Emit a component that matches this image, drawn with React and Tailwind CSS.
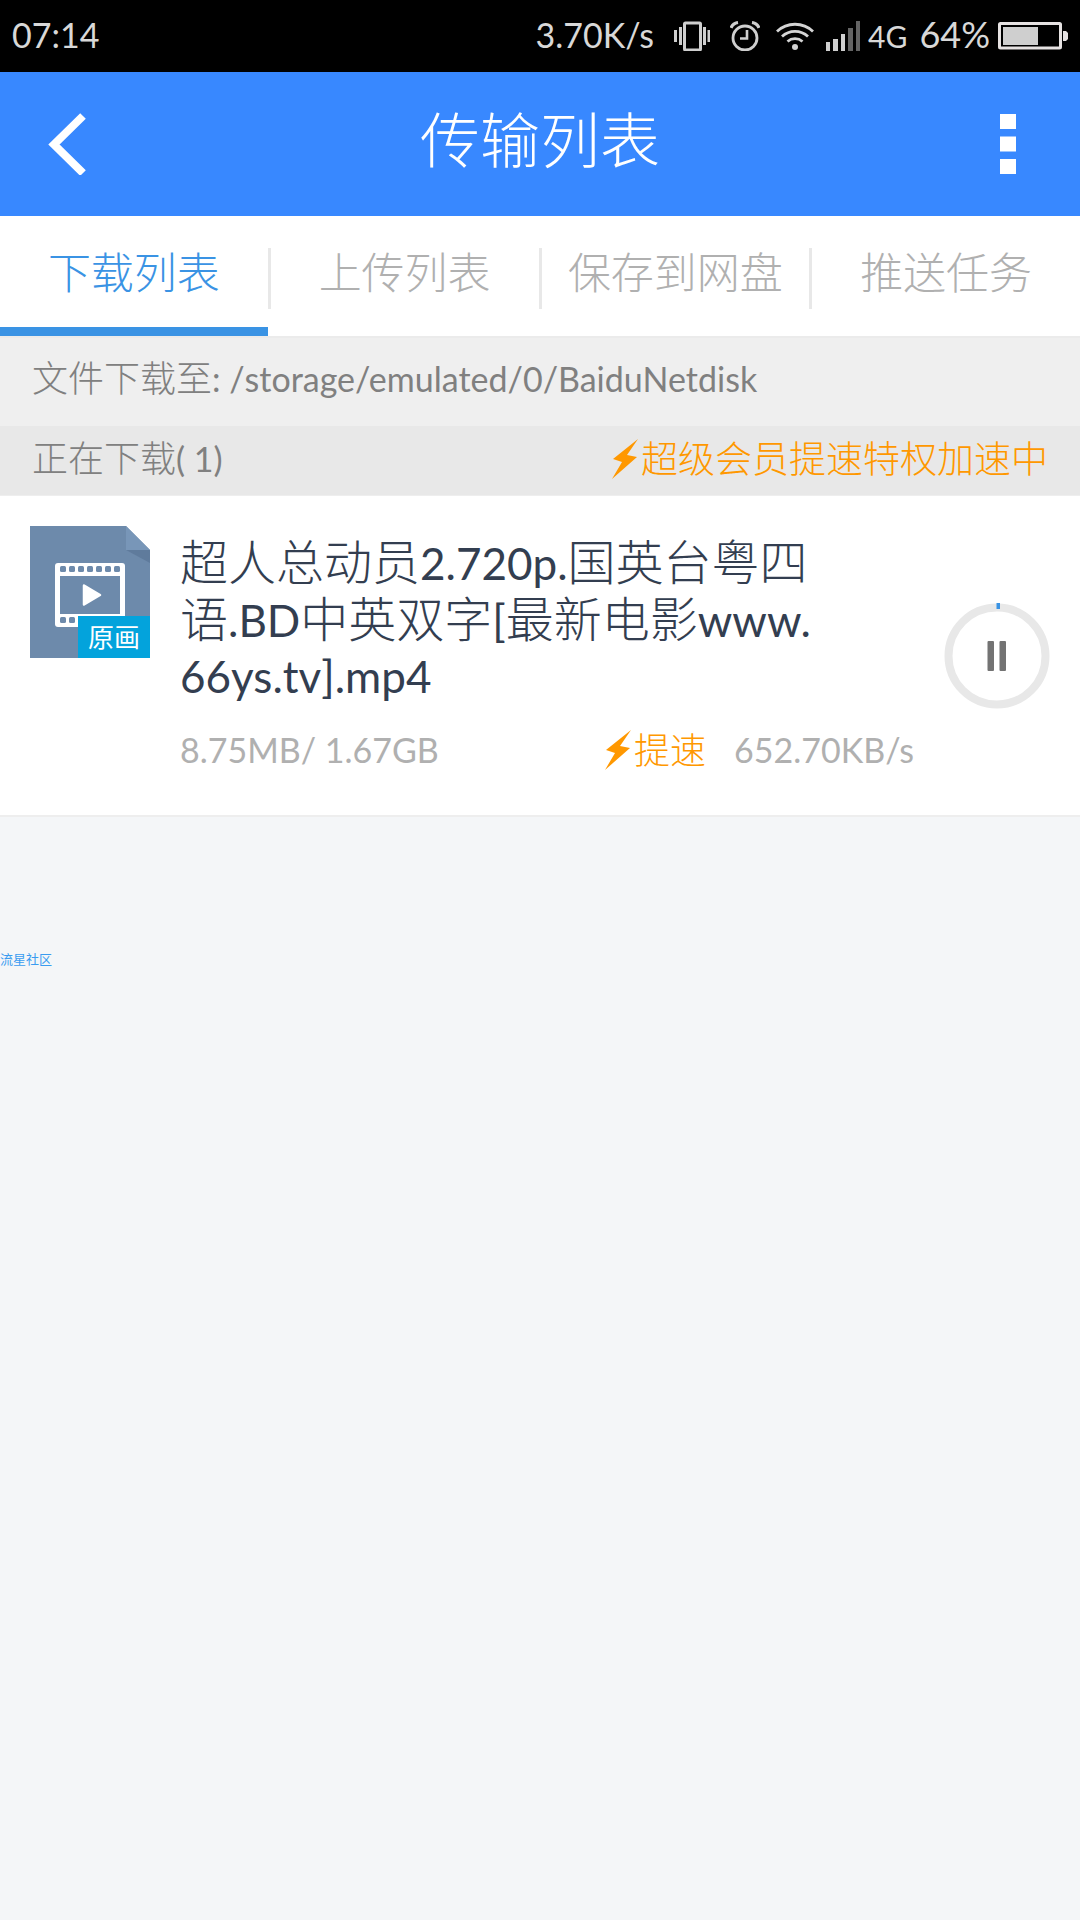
import { Fragment } from "react";

const tabs = [
  { label: "下载列表", active: true },
  { label: "上传列表" },
  { label: "保存到网盘" },
  { label: "推送任务" },
];

function VibrateIcon() {
  return (
    <svg className="h-[30px] w-9" viewBox="0 0 36 30" fill="#cfcfcf" aria-hidden="true">
      <rect x="0" y="9" width="3" height="12" />
      <rect x="5" y="6" width="3" height="18" />
      <rect x="10.500" y="2" width="16" height="27" rx="1" fill="none" stroke="#cfcfcf" strokeWidth="3" />
      <rect x="29" y="6" width="3" height="18" />
      <rect x="33.500" y="9" width="2.500" height="12" />
    </svg>
  );
}

function AlarmIcon() {
  return (
    <svg className="h-[30px] w-[30px]" viewBox="0 0 30 30" fill="none" stroke="#cfcfcf" aria-hidden="true">
      <circle cx="15" cy="17" r="12" strokeWidth="2.800" />
      <path d="M17 9v8.500h-7" strokeWidth="2.600" />
      <path d="M1 7a9 9 0 0 1 7-5.500M29 7a9 9 0 0 0-7-5.500" strokeWidth="3.200" />
    </svg>
  );
}

function WifiIcon() {
  return (
    <svg className="h-[30px] w-[38px]" viewBox="0 0 38 30" fill="none" stroke="#d4d4d4" strokeWidth="2.800" aria-hidden="true">
      <path d="M1 10.500a26 26 0 0 1 36 0" />
      <path d="M6 15.500a19 19 0 0 1 26 0" />
      <path d="M11.500 20.500a11.500 11.500 0 0 1 15 0" />
      <circle cx="19" cy="26" r="3" fill="#d4d4d4" stroke="none" />
    </svg>
  );
}

function SignalIcon() {
  return (
    <svg className="h-[30px] w-[34px]" viewBox="0 0 34 30" fill="#cfcfcf" aria-hidden="true">
      <rect x="0" y="21" width="4" height="9" />
      <rect x="7" y="18" width="5" height="12" />
      <rect x="15" y="13" width="4" height="17" />
      <rect x="22" y="7" width="5" height="23" fill="#646464" />
      <rect x="30" y="0" width="4" height="30" fill="#646464" />
    </svg>
  );
}

function BatteryIcon() {
  return (
    <svg className="h-7 w-[70px]" viewBox="0 0 70 28" aria-hidden="true">
      <rect x="1.500" y="1.500" width="61" height="24.500" rx="1" fill="none" stroke="#e6e2e2" strokeWidth="3" />
      <rect x="5" y="5" width="35" height="18" fill="#cfcfcf" />
      <path d="M65 9h3l2 2v6l-2 2h-3z" fill="#e6e2e2" />
    </svg>
  );
}

function BoltIcon() {
  return (
    <svg className="h-10 w-[30px] shrink-0" viewBox="0 0 30 40" fill="#ff9800" aria-hidden="true">
      <path d="M27 0 2 20l9 3L1 40l25-22-10-2z" />
    </svg>
  );
}

function FileIcon() {
  return (
    <span className="relative block h-[132px] w-[120px] shrink-0">
      <svg className="h-full w-full" viewBox="0 0 120 132" aria-hidden="true">
        <path d="M0 0h96l24 24v108H0z" fill="#6d8aab" />
        <path d="M96 24h24v13z" fill="#5f7b9c" />
        <path d="M96 0l24 24H96z" fill="#7896b8" />
        <rect x="25" y="37" width="70" height="64" rx="3" fill="#fff" />
        <rect x="30" y="50" width="60" height="38" fill="#6d8aab" />
        <g fill="#6d8aab">
          {[30, 39, 48, 57, 66, 75, 84].map((x) => (
            <g key={x}>
              <rect x={x} y="40" width="6" height="6" rx="1.500" />
              <rect x={x} y="91" width="6" height="6" rx="1.500" />
            </g>
          ))}
        </g>
        <path d="M54 59.500 70 69 54 78.500z" fill="#fff" stroke="#fff" strokeWidth="2.500" strokeLinejoin="round" />
      </svg>
      <span className="absolute right-0 bottom-0 flex h-[42px] w-[72px] items-center justify-center bg-[#03a3dc] text-[26px] leading-none font-normal text-white">
        原画
      </span>
    </span>
  );
}

function PauseButton() {
  return (
    <button type="button" aria-label="暂停" className="h-[106px] w-[106px] shrink-0 self-center">
      <svg className="h-full w-full" viewBox="0 0 106 106" aria-hidden="true">
        <circle cx="53" cy="53" r="48.500" fill="none" stroke="#e8e8e8" strokeWidth="8" />
        <rect x="52.500" y="0" width="3.500" height="6" fill="#3a93e4" />
        <rect x="43.500" y="38" width="6.500" height="30" rx="1" fill="#737373" />
        <rect x="55.500" y="38" width="6.500" height="30" rx="1" fill="#737373" />
      </svg>
    </button>
  );
}

export default function App() {
  return (
    <div className="min-h-screen bg-[#f4f6f8] font-['Lato','Noto_Sans_CJK_SC',sans-serif] font-light">
      <div className="flex h-[72px] items-center bg-black pr-3 pb-1 pl-3 text-[34px] font-normal text-[#d8d8d8]">
        <span>07:14</span>
        <span className="ml-auto">3.70K/s</span>
        <span className="ml-5 flex items-center gap-5 pt-1">
          <VibrateIcon />
          <AlarmIcon />
        </span>
        <span className="ml-4 flex items-center gap-3 pt-1">
          <WifiIcon />
          <SignalIcon />
        </span>
        <span className="ml-2 pt-1 text-3xl">4G</span>
        <span className="mr-2 ml-3 text-4xl">64%</span>
        <span className="pt-1">
          <BatteryIcon />
        </span>
      </div>

      <header className="grid h-36 grid-cols-[144px_1fr_144px] items-center bg-[#3888ff] text-white">
        <button type="button" aria-label="返回" className="flex h-full items-center pl-12">
          <svg className="h-[62px] w-10" viewBox="0 0 40 62" fill="none" stroke="currentColor" strokeWidth="8" aria-hidden="true">
            <path d="M35 3 6 31.500 35 60" />
          </svg>
        </button>
        <h1 className="pb-2 text-center text-6xl">传输列表</h1>
        <button type="button" aria-label="更多" className="flex h-full items-center justify-end pr-16">
          <svg className="h-[60px] w-4" viewBox="0 0 16 60" fill="currentColor" aria-hidden="true">
            <path d="M0 0h16v15H0zM0 22.500h16v15H0zM0 45h16v15H0z" />
          </svg>
        </button>
      </header>

      <nav className="flex h-[120px] bg-white text-[43px] text-[#b0b0b0]">
        {tabs.map((tab, i) => (
          <Fragment key={tab.label}>
            {i > 0 && <span className="mt-8 h-[61px] w-[3px] bg-[#e8e8e8]" />}
            <button
              type="button"
              aria-current={tab.active ? "page" : undefined}
              className={
                tab.active
                  ? "flex-1 border-b-9 border-[#3a93e4] pt-1 whitespace-nowrap text-[#3a93e4]"
                  : "flex-1 border-b-9 border-transparent pt-1 whitespace-nowrap"
              }
            >
              {tab.label}
            </button>
          </Fragment>
        ))}
      </nav>

      <p className="flex h-[90px] items-center border-t-2 border-[#ebebeb] bg-[#efefef] px-8 pb-2 text-[34px] font-normal text-[#808080]">
        <span>
          <span className="text-4xl font-light">文件下载至</span>: /storage/emulated/0/BaiduNetdisk
        </span>
      </p>

      <div className="flex h-[70px] items-center justify-between border-b border-[#eeeeee] bg-[#e8e8e8] px-8 pb-1">
        <h2 className="text-[34px] font-normal text-[#808080]">
          <span className="text-4xl font-light">正在下载</span>( 1)
        </h2>
        <p className="flex items-center text-[37px] text-[#ff9800]">
          <BoltIcon />
          超级会员提速特权加速中
        </p>
      </div>

      <article className="flex gap-[30px] border-b-2 border-[#eeeeee] bg-white px-[30px] py-[30px]">
        <FileIcon />
        <div className="min-w-0 flex-1 pt-2 pb-[10px]">
          <h3 className="text-[44px] leading-[56px] font-normal text-[#333e50]">
            <span className="text-5xl leading-[56px] font-light">超人总动员</span>2.720p.
            <span className="text-5xl leading-[56px] font-light">国英台粤四</span>
            <br />
            <span className="text-5xl leading-[56px] font-light">语</span>.BD
            <span className="text-5xl leading-[56px] font-light">中英双字</span>[
            <span className="text-5xl leading-[56px] font-light">最新电影</span>www.
            <br />
            66ys.tv].mp4
          </h3>
          <div className="mt-5 flex items-center text-[34px] font-normal text-[#b0b0b0]">
            <span>8.75MB/ 1.67GB</span>
            <span className="ml-auto flex items-center text-4xl font-light text-[#ff9800]">
              <BoltIcon />
              提速
            </span>
            <span className="ml-7">652.70KB/s</span>
          </div>
        </div>
        <PauseButton />
      </article>

      <p className="mt-[133px] text-[13px] font-normal text-[#3a9cf0]">流星社区</p>
    </div>
  );
}
